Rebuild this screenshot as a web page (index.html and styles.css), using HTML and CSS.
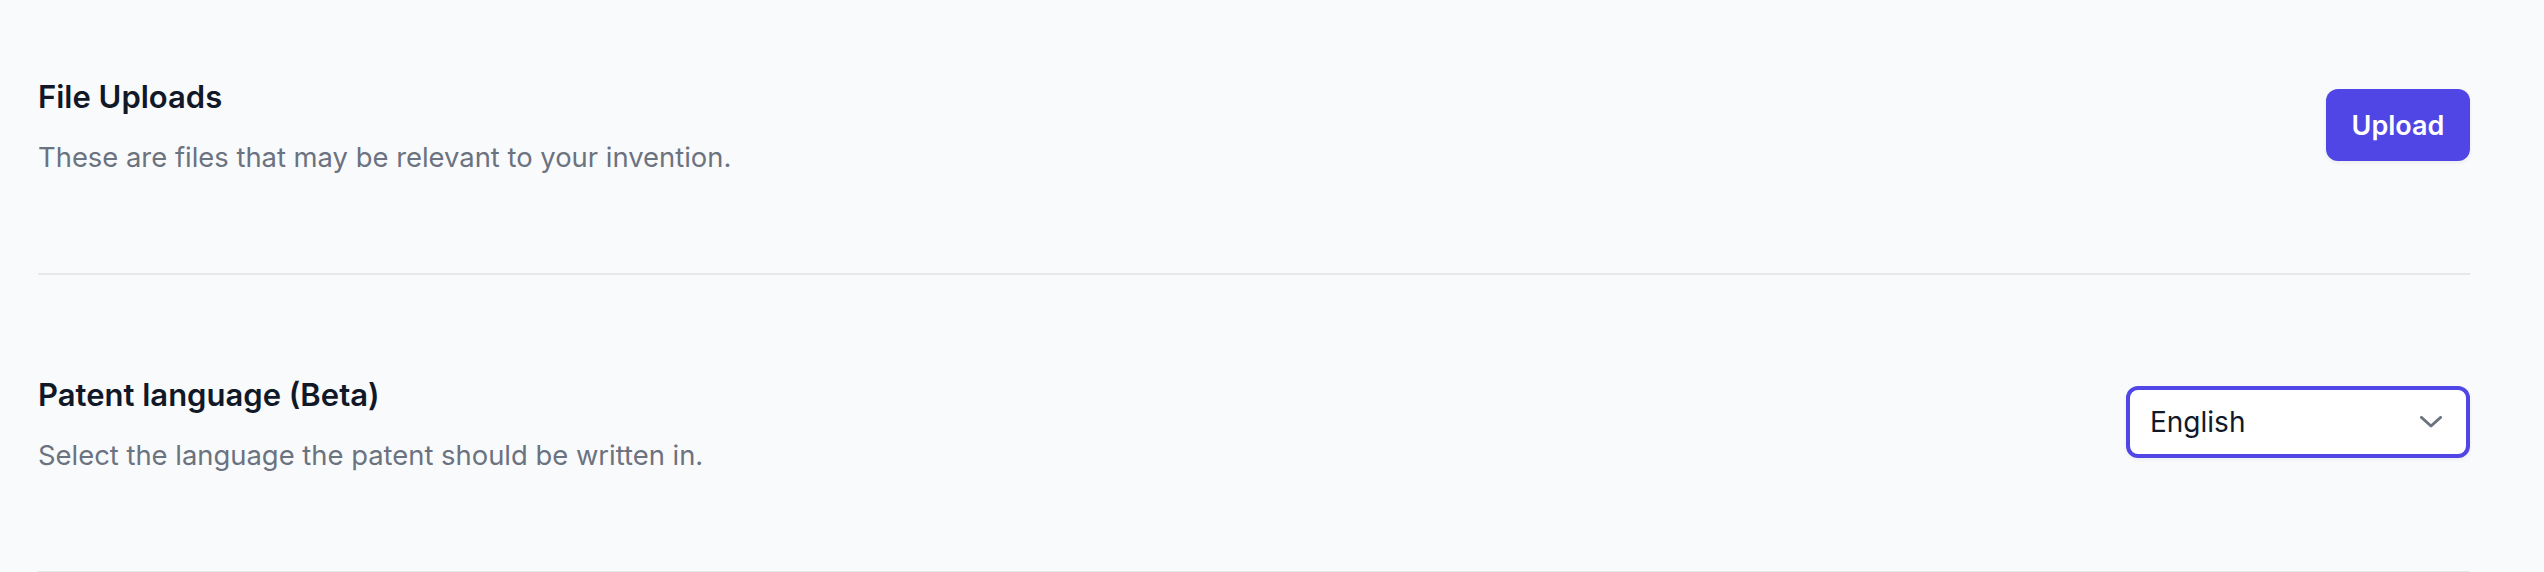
FILE: index.html
```html
<!DOCTYPE html>
<html lang="en">
<head>
<meta charset="utf-8">
<title>Settings</title>
<link rel="stylesheet" href="styles.css">
</head>
<body>
<main class="page">
  <section class="row first">
    <div class="text">
      <h2 class="title">File Uploads</h2>
      <p class="desc">These are files that may be relevant to your invention.</p>
    </div>
    <button class="btn" type="button">Upload</button>
  </section>
  <section class="row">
    <div class="text">
      <h2 class="title">Patent language (Beta)</h2>
      <p class="desc">Select the language the patent should be written in.</p>
    </div>
    <div class="select">
      <span class="select-value">English</span>
      <svg class="chev" width="22" height="12" viewBox="0 0 22 12" fill="none">
        <path d="M1.5 1.5 L11 10 L20.5 1.5" stroke="#6b7280" stroke-width="3" stroke-linecap="round" stroke-linejoin="round"/>
      </svg>
    </div>
  </section>
</main>
</body>
</html>
```
FILE: styles.css
```css
* { box-sizing: border-box; }
html, body {
  margin: 0;
  padding: 0;
  background: #f9fafb;
  font-family: Inter, "Noto Sans", "Liberation Sans", sans-serif;
}
.page {
  padding: 0 74px 0 38px;
}
.row {
  display: flex;
  align-items: center;
  justify-content: space-between;
  padding: 96px 0 96px;
  border-bottom: 2px solid #e5e7eb;
}
.row.first {
  padding-top: 73px;
}
.text {
  display: flex;
  flex-direction: column;
  gap: 16px;
}
.title {
  margin: 0;
  font-size: 31px;
  line-height: 48px;
  font-weight: 600;
  color: #111827;
}
.desc {
  margin: 0;
  font-size: 27.4px;
  line-height: 40px;
  font-weight: 400;
  color: #6b7280;
}
.btn {
  width: 144px;
  height: 72px;
  border: 0;
  border-radius: 12px;
  background: #4f46e5;
  color: #ffffff;
  font-family: inherit;
  font-size: 27px;
  font-weight: 600;
  box-shadow: 0 2px 4px rgba(0,0,0,0.06);
  padding: 0;
}
.select {
  width: 344px;
  height: 72px;
  margin-top: -2px;
  background: #ffffff;
  border: 4px solid #4f46e5;
  border-radius: 12px;
  display: flex;
  align-items: center;
  justify-content: space-between;
  padding: 0 24px 0 20px;
  box-shadow: 0 2px 4px rgba(0,0,0,0.05);
}
.select-value {
  font-size: 28px;
  color: #111827;
}
.chev {
  display: block;
}
```
